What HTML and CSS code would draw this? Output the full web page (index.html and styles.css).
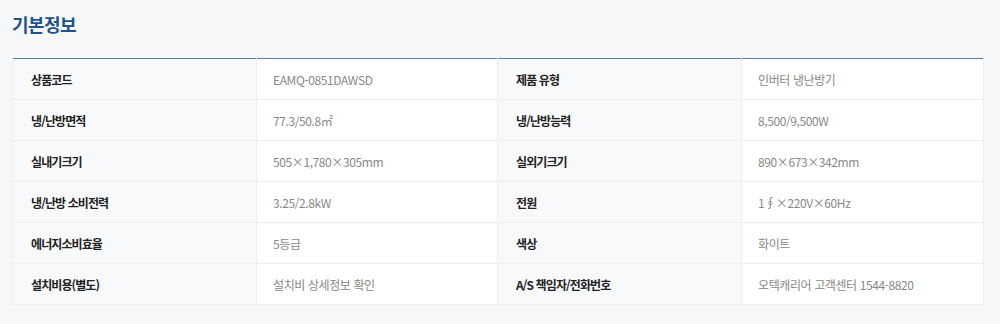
FILE: index.html
```html
<!DOCTYPE html>
<html lang="ko">
<head>
<meta charset="utf-8">
<link rel="stylesheet" href="styles.css">
</head>
<body>
<section class="info">
  <h2 class="info-title">기본정보</h2>
  <table class="spec">
    <colgroup>
      <col class="col-label">
      <col class="col-value">
      <col class="col-label">
      <col class="col-value2">
    </colgroup>
    <tr><th>상품코드</th><td>EAMQ-0851DAWSD</td><th>제품 유형</th><td>인버터 냉난방기</td></tr>
    <tr><th>냉/난방면적</th><td>77.3/50.8㎡</td><th>냉/난방능력</th><td>8,500/9,500W</td></tr>
    <tr><th>실내기크기</th><td>505×1,780×305mm</td><th>실외기크기</th><td>890×673×342mm</td></tr>
    <tr><th>냉/난방 소비전력</th><td>3.25/2.8kW</td><th>전원</th><td>1∮×220V×60Hz</td></tr>
    <tr><th>에너지소비효율</th><td>5등급</td><th>색상</th><td>화이트</td></tr>
    <tr><th>설치비용(별도)</th><td>설치비 상세정보 확인</td><th>A/S 책임자/전화번호</th><td>오텍캐리어 고객센터 1544-8820</td></tr>
  </table>
</section>
</body>
</html>
```
FILE: styles.css
```css
html, body {
  margin: 0;
  padding: 0;
  background: #f6f7f9;
  font-family: "Noto Sans CJK KR", "Noto Sans", sans-serif;
}
.info {
  padding: 10px 17px 0 12px;
}
.info-title {
  margin: 0;
  font-size: 18px;
  line-height: 28px;
  font-weight: 700;
  color: #22518f;
  letter-spacing: -0.6px;
}
.spec {
  margin-top: 20px;
  width: 971px;
  border-collapse: collapse;
  table-layout: fixed;
  border-top: 1px solid #5b7fa6;
}
.col-label { width: 244px; }
.col-value { width: 241px; }
.col-value2 { width: 242px; }
.spec th, .spec td {
  height: 40px;
  padding: 0;
  border: 1px solid #eceef2;
  border-top: none;
  font-size: 12px;
  text-align: left;
  vertical-align: middle;
}
.spec th {
  padding-left: 18px;
  background: #f8f9fa;
  color: #222;
  font-weight: 700;
  letter-spacing: -0.9px;
}
.spec td {
  padding-left: 16px;
  background: #fff;
  color: #888;
  font-weight: 400;
  letter-spacing: -0.4px;
}
```
